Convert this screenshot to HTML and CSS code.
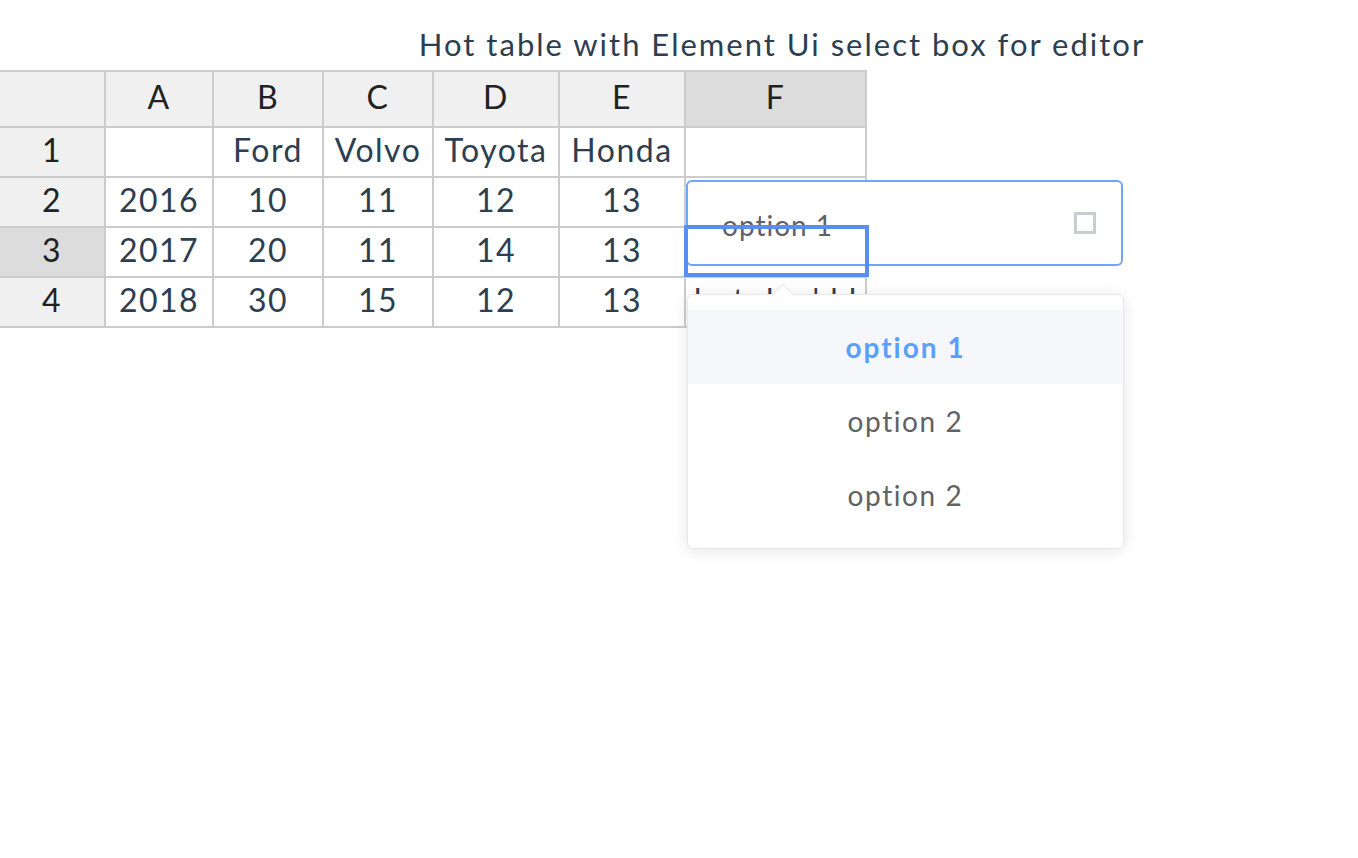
FILE: index.html
```html
<!DOCTYPE html>
<html>
<head>
<meta charset="utf-8">
<link rel="stylesheet" href="styles.css">
</head>
<body>
<div class="app">
  <div class="title">Hot table with Element Ui select box for editor</div>
  <div class="hot-wrap">
    <table class="hot">
      <colgroup>
        <col class="c0"><col class="c1"><col class="c2"><col class="c3"><col class="c4"><col class="c5"><col class="c6">
      </colgroup>
      <thead>
        <tr>
          <th class="corner"></th><th>A</th><th>B</th><th>C</th><th>D</th><th>E</th><th class="hl">F</th>
        </tr>
      </thead>
      <tbody>
        <tr><th>1</th><td></td><td>Ford</td><td>Volvo</td><td>Toyota</td><td>Honda</td><td></td></tr>
        <tr><th>2</th><td>2016</td><td>10</td><td>11</td><td>12</td><td>13</td><td></td></tr>
        <tr><th class="hl">3</th><td>2017</td><td>20</td><td>11</td><td>14</td><td>13</td><td></td></tr>
        <tr><th>4</th><td>2018</td><td>30</td><td>15</td><td>12</td><td>13</td><td class="clip">hot dog'd l</td></tr>
      </tbody>
    </table>

    <div class="select">
      <span class="select-value">option 1</span>
      <span class="select-icon"></span>
    </div>

    <div class="current"></div>

    <div class="dropdown">
      <div class="arrow"></div>
      <ul class="options">
        <li class="option selected">option 1</li>
        <li class="option">option 2</li>
        <li class="option">option 2</li>
      </ul>
    </div>
  </div>
</div>
</body>
</html>
```

FILE: styles.css
```css
* { box-sizing: border-box; }
html, body { margin: 0; padding: 0; background: #fff; }
body {
  font-family: "Lato", "Open Sans", "Liberation Sans", sans-serif;
  color: #2c3e50;
  min-height: 858px;
}
.app { width: 1358px; min-height: 858px; }
.title {
  height: 70px;
  padding-top: 26px;
  padding-left: 206px;
  text-align: center;
  font-size: 31px;
  letter-spacing: 2px;
  line-height: 36px;
  color: #2c3e50;
}
.hot-wrap { position: relative; min-height: 600px; }
.hot {
  border-collapse: separate;
  border-spacing: 0;
  table-layout: fixed;
  width: 867px;
  font-size: 32px;
  letter-spacing: 1.5px;
}
.c0 { width: 106px; }
.c1 { width: 108px; }
.c2 { width: 110px; }
.c3 { width: 110px; }
.c4 { width: 126px; }
.c5 { width: 126px; }
.c6 { width: 181px; }
.hot th, .hot td {
  border-right: 2px solid #ccc;
  border-bottom: 2px solid #ccc;
  height: 50px;
  padding: 0 2px 5px;
  text-align: center;
  vertical-align: middle;
  font-weight: normal;
  white-space: nowrap;
  overflow: hidden;
}
.hot thead th {
  border-top: 2px solid #ccc;
  height: 58px;
}
.hot th {
  background: #f0f0f0;
  color: #222;
}
.hot th.hl { background: #dcdcdc; }
.hot td { color: #2c3e50; background: #fff; }
.hot td.clip { text-align: left; padding-left: 8px; }

.select {
  position: absolute;
  left: 686px;
  top: 110px;
  width: 437px;
  height: 86px;
  border: 2px solid #6ea6f9;
  border-radius: 6px;
  background: #fff;
  display: flex;
  align-items: center;
  padding-left: 34px;
  padding-right: 25px;
}
.select-value {
  flex: 1;
  font-size: 28px;
  letter-spacing: 1px;
  color: #606266;
  line-height: 1;
  padding-top: 3px;
}
.select-icon {
  width: 22px;
  height: 22px;
  border: 3px solid #c9ccd1;
  margin-top: 0;
}
.current {
  position: absolute;
  left: 684px;
  top: 155px;
  width: 185px;
  height: 52px;
  border: 4px solid #5b8cf2;
}
.dropdown {
  position: absolute;
  left: 687px;
  top: 224px;
  width: 437px;
  height: 255px;
  background: #fff;
  border: 1px solid #e4e7ed;
  border-radius: 6px;
  box-shadow: 0 2px 16px rgba(0, 0, 0, 0.1);
  padding: 15px 0 15px;
}
.arrow {
  position: absolute;
  left: 87px;
  top: -8px;
  width: 16px;
  height: 16px;
  background: #fff;
  border-left: 1px solid #e4e7ed;
  border-top: 1px solid #e4e7ed;
  transform: rotate(45deg);
}
.options { list-style: none; margin: 0; padding: 0; position: relative; }
.option {
  height: 74px;
  display: flex;
  align-items: center;
  justify-content: center;
  font-size: 28px;
  letter-spacing: 1.6px;
  color: #606266;
}
.option.selected {
  background: #f5f7fa;
  color: #5aa0fb;
  font-weight: bold;
  letter-spacing: 2px;
}
```
